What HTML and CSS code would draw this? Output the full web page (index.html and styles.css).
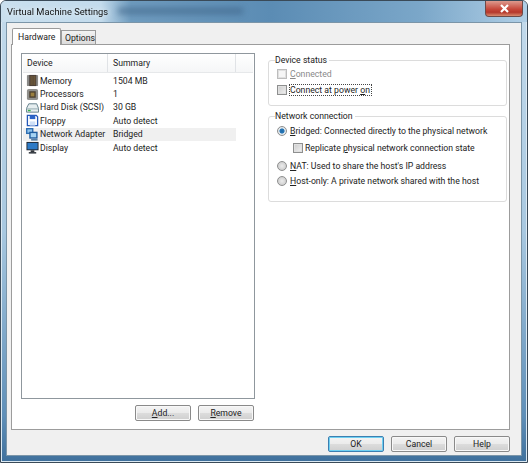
FILE: index.html
```html
<!DOCTYPE html>
<html lang="en">
<head>
<meta charset="utf-8">
<title>Virtual Machine Settings</title>
<link rel="stylesheet" href="styles.css">
</head>
<body>
<div class="window">
  <header class="titlebar">
    <span class="title">Virtual Machine Settings</span>
    <span class="title-blur"></span>
    <button class="close" aria-label="Close"><svg width="11" height="9" viewBox="0 0 11 9"><path d="M2 1 L9 8 M9 1 L2 8" stroke="#fff" stroke-width="2.2" fill="none"/></svg></button>
  </header>
  <div class="client">
    <div class="tabs">
      <div class="tab active">Hardware</div>
      <div class="tab">Options</div>
    </div>
    <div class="panel">
      <div class="left">
        <div class="list">
          <div class="list-head">
            <span class="col-device">Device</span>
            <span class="col-summary">Summary</span>
            <span class="col-rest"></span>
          </div>
          <div class="row">
            <span class="col-device"><svg class="ico" viewBox="0 0 14 14"><rect x="1" y="1" width="12" height="12" rx="1" fill="#8a8a88"/><rect x="3.500" y="1" width="7.500" height="12" fill="#4a3f38"/><path d="M5.500 2v10M7.500 2v10M9.500 2v10" stroke="#8a6d3a" stroke-width=".8"/></svg>Memory</span>
            <span class="col-summary">1504 MB</span>
          </div>
          <div class="row">
            <span class="col-device"><svg class="ico" viewBox="0 0 14 14"><rect x="1" y="1" width="12" height="12" rx="2" fill="#8f8f8c"/><rect x="3.500" y="3.500" width="7" height="7" fill="#4d4230"/><rect x="5" y="5" width="4" height="4" fill="#9a7f3e"/></svg>Processors</span>
            <span class="col-summary">1</span>
          </div>
          <div class="row">
            <span class="col-device"><svg class="ico" viewBox="0 0 14 14"><path d="M3 3 H11.500 L13.500 8 V12 H.5 V8 Z" fill="#e6eef0" stroke="#5f7c88"/><path d="M1 8.500H13" stroke="#90a6ae"/><rect x="2" y="9.500" width="3" height="1.500" fill="#37b24a"/></svg>Hard Disk (SCSI)</span>
            <span class="col-summary">30 GB</span>
          </div>
          <div class="row">
            <span class="col-device"><svg class="ico" viewBox="0 0 14 14"><path d="M1.500 1.500H11L12.500 3V12.500H1.500Z" fill="#fff" stroke="#2458b8" stroke-width="1.400"/><rect x="4" y="1.500" width="6" height="4" fill="#2c64c8"/><rect x="4" y="8" width="6" height="4.500" fill="#cfe0f7"/></svg>Floppy</span>
            <span class="col-summary">Auto detect</span>
          </div>
          <div class="row selected">
            <span class="col-device"><svg class="ico" viewBox="0 0 14 14"><rect x="0" y="0" width="8" height="6.500" fill="#2f6fb2"/><rect x="1.500" y="1.500" width="5" height="3.500" fill="#8fc4ee"/><rect x="3.500" y="4" width="9" height="7.500" fill="#1f5d9e"/><rect x="5" y="5.500" width="6" height="4.500" fill="#a5d4f4"/><rect x="5.500" y="12" width="7" height="1.500" fill="#3d6d98"/></svg>Network Adapter</span>
            <span class="col-summary">Bridged</span>
          </div>
          <div class="row">
            <span class="col-device"><svg class="ico" viewBox="0 0 14 14"><rect x=".5" y="1" width="13" height="9" fill="#20262e"/><rect x="1.500" y="2" width="11" height="7" fill="#2d7ac6"/><rect x="5" y="10" width="4" height="2" fill="#30343a"/><rect x="3" y="12" width="8" height="1.500" fill="#20262e"/></svg>Display</span>
            <span class="col-summary">Auto detect</span>
          </div>
        </div>
        <div class="list-actions">
          <button class="btn"><u>A</u>dd...</button>
          <button class="btn"><u>R</u>emove</button>
        </div>
      </div>
      <div class="right">
        <fieldset class="group status">
          <legend>Device status</legend>
          <label class="opt disabled"><span class="check"></span><span><u>C</u>onnected</span></label>
          <label class="opt second"><span class="check"></span><span class="focus">Connect at power <u>o</u>n</span></label>
        </fieldset>
        <fieldset class="group network">
          <legend>Network connection</legend>
          <label class="opt"><span class="radio on"></span><span><u>B</u>ridged: Connected directly to the physical network</span></label>
          <label class="opt sub"><span class="check"></span><span>Replicate <u>p</u>hysical network connection state</span></label>
          <label class="opt"><span class="radio"></span><span><u>N</u>AT: Used to share the host's IP address</span></label>
          <label class="opt"><span class="radio"></span><span><u>H</u>ost-only: A private network shared with the host</span></label>
        </fieldset>
      </div>
    </div>
    <footer class="footer">
      <button class="btn default">OK</button>
      <button class="btn">Cancel</button>
      <button class="btn">Help</button>
    </footer>
  </div>
</div>
</body>
</html>
```

FILE: styles.css
```css
* { box-sizing: border-box; }
html, body { margin: 0; padding: 0; }
body {
  width: 528px; height: 463px; overflow: hidden;
  font-family: Roboto, "Noto Sans", sans-serif;
  font-size: 8.7px; color: #222; background: #fff;
}
.window {
  width: 528px; height: 463px;
  display: flex; flex-direction: column;
  padding: 0 5px 6px 5px;
  border: 1px solid #3a4a58;
  border-radius: 6px 6px 0 0;
  background: linear-gradient(#c4dbec 0, #a8c8e0 50%, #5f8fb8 90%, #3f709c 100%);
  box-shadow: inset 0 0 0 1px #dbe9f3;
  filter: blur(.35px);
}
.titlebar {
  height: 21px; flex: none;
  display: flex; align-items: center;
  margin: 0 -5px 0 -5px; padding: 0 4px 1px 6px;
  border-radius: 5px 5px 0 0;
  background: linear-gradient(90deg, #c9dfee 0, #c3dbec 100px, #6f9cbf 130px, #5b8cb4 270px, #7ba7c9 420px, #b0cfe6 100%);
}
.title { font-size: 9.3px; color: #111; text-shadow: 0 0 6px #fff; white-space: nowrap; }
.title-blur {
  width: 125px; height: 6px; margin-left: 10px;
  background: #3f6488; filter: blur(3px); opacity: .7;
}
.close {
  margin-left: auto; margin-top: -5px;
  width: 38px; height: 16px; padding: 0;
  display: flex; align-items: center; justify-content: center;
  border: 1px solid #6e4a48; border-top: 0; border-radius: 0 0 4px 4px;
  background: linear-gradient(#dd9a8e, #c6473a 55%, #b5382c 75%, #d88a6e);
}
.client {
  flex: 1; display: flex; flex-direction: column;
  background: #f0f0f0;
  padding: 5px 11px 0 4px;
  border: 1px solid #7b95a8;
}
.tabs { display: flex; align-items: flex-end; height: 16px; padding-left: 1px; position: relative; z-index: 1; }
.tab {
  height: 14px; width: 35px; padding: 0 0 0 3px; line-height: 14px;
  background: linear-gradient(#f2f2f2, #dcdcdc);
  border: 1px solid #9a9a9a; border-bottom: 0;
}
.tab.active {
  height: 17px; width: 49px; padding: 0 0 0 5px; margin-bottom: -1px;
  background: #fff; border-radius: 2px 2px 0 0; line-height: 16px;
}
.panel {
  height: 386px; flex: none;
  display: flex; gap: 13px;
  background: #fff;
  border: 1px solid #9c9c9c;
  padding: 8px 2px 0 9px;
}
.left { width: 234px; flex: none; display: flex; flex-direction: column; }
.list {
  height: 346px; flex: none;
  border: 1px solid #8f979d;
  padding: 0 1px;
  background: #fff;
}
.list-head {
  display: flex; height: 19px; align-items: center;
  background: linear-gradient(#fff, #f5f6f7);
  border-bottom: 1px solid #e6e8ea;
}
.list-head .col-device, .list-head .col-summary { height: 100%; line-height: 19px; border-right: 1px solid #e0e3e6; }
.list-head .col-rest { flex: 1; }
.col-device { width: 85px; flex: none; padding-left: 4px; display: flex; align-items: center; white-space: nowrap; }
.col-summary { width: 128px; flex: none; padding-left: 5px; white-space: nowrap; }
.row { display: flex; align-items: center; height: 13.4px; width: 213px; }
.list-head + .row { margin-top: 1px; }
.row.selected { background: #f0f0f0; }
.ico { width: 13px; height: 13px; flex: none; margin: 0 1px 0 -1px; }
.list-actions { display: flex; justify-content: flex-end; gap: 7px; margin-top: 6px; padding-right: 1px; }
.btn {
  width: 56px; height: 16px; padding: 0;
  font: inherit; color: inherit;
  background: linear-gradient(#f4f4f4 0, #ebebeb 48%, #dcdcdc 52%, #cfcfcf 100%);
  border: 1px solid #8a8a8a; border-radius: 2px;
  box-shadow: inset 0 0 0 1px #f8f8f8;
}
.btn.default { border-color: #3c7fb1; box-shadow: inset 0 0 0 1px #6fd0f2; }
.right { flex: 1; display: flex; flex-direction: column; gap: 4px; padding-top: 1px; }
.group {
  margin: 0; padding: 0 0 0 6px;
  border: 1px solid #dcdcdc; border-radius: 3px;
  min-width: 0;
}
.group legend { padding: 0 2px 0 0; margin-left: 0; line-height: 12px; }
.status { height: 52px; flex: none; }
.network { height: 92px; flex: none; }
.opt { display: flex; align-items: center; height: 15px; gap: 3px; padding-left: 2px; white-space: nowrap; }
.opt.second { margin-top: 1px; }
.network .opt:first-of-type { margin-top: 1px; }
.opt.sub { margin-left: 16px; height: 20px; gap: 2px; }
.opt.disabled { color: #8a8a8a; }
.opt.disabled .check { background: #f6f6f6; border-color: #bdbdbd; }
.check {
  width: 10px; height: 10px; flex: none;
  margin-right: 0;
  border: 1px solid #8e8f8f;
  background: linear-gradient(135deg, #cbcbcb, #f2f2f2);
  box-shadow: inset 0 0 0 1px #e0e0e0;
}
.radio {
  width: 10px; height: 10px; flex: none;
  border: 1px solid #8e8f8f; border-radius: 50%;
  background: radial-gradient(circle, #ececec, #c4c4c4);
}
.radio.on { background: radial-gradient(circle, #1c6aa8 0, #2a78b8 38%, #dfe7ec 52%, #e8e8e8 100%); }
.focus { outline: 1px dotted #444; outline-offset: 0; padding-right: 1px; }
.footer { display: flex; justify-content: flex-end; gap: 7px; padding-top: 6px; }
```
